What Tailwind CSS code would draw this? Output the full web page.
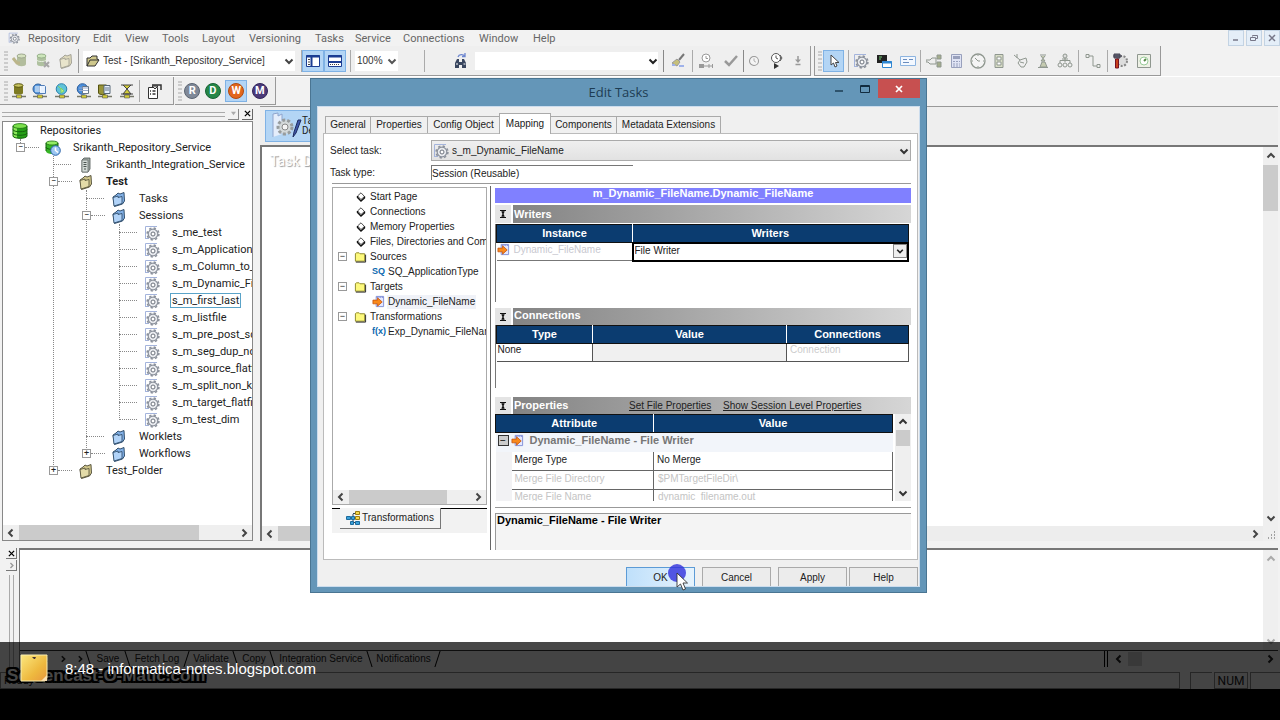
<!DOCTYPE html>
<html lang="en">
  <head>
    <meta charset="UTF-8">
    <meta name="viewport" content="width=device-width, initial-scale=1.0">
    <title>Workflow Manager - Edit Tasks</title>
    <script src="https://cdn.jsdelivr.net/npm/@tailwindcss/browser@4"></script>
  </head>
  <body class="bg-black font-[Roboto,sans-serif] text-[11px] leading-none text-[#222]">
    <!-- shared icons -->
    <svg class="hidden" xmlns="http://www.w3.org/2000/svg">
      <symbol id="db" viewBox="0 0 16 16">
        <path d="M1 3v10c0 1.500 3.500 2.500 7 2.500s7-1 7-2.500V3z" fill="#25a016"/>
        <path d="M1 3v10c0 1 1.500 1.800 4 2.200V4z" fill="#8ce85a"/>
        <ellipse cx="8" cy="3" rx="7" ry="2.400" fill="#7be04c" stroke="#1b6f10" stroke-width=".8"/>
        <path d="M1 6.500c0 3 14 3 14 0M1 10c0 3 14 3 14 0M1 13c0 3 14 3 14 0V3M1 13V3" fill="none" stroke="#14600c"/>
      </symbol>
      <symbol id="dbclock" viewBox="0 0 16 16">
        <path d="M1 3v8c0 2 3 3 6 3s6-1 6-3V3z" fill="#37b526"/>
        <ellipse cx="7" cy="3" rx="6" ry="2" fill="#92ec64" stroke="#1b6f10" stroke-width=".8"/>
        <path d="M1 7c0 2 6 3 8 2M1 11V3M13 6V3" fill="none" stroke="#14600c"/>
        <circle cx="10.500" cy="10.500" r="4.800" fill="#9bc6f2" stroke="#2a62a8"/>
        <path d="M10.500 7.500v3l2.500 2" fill="none" stroke="#fff" stroke-width="1.500"/>
      </symbol>
      <symbol id="server" viewBox="0 0 16 16">
        <path d="M4 3l2-2h6v11l-2 3H4z" fill="#9fa8a4" stroke="#4c5450" stroke-width=".8"/>
        <path d="M4 3h6v12H4z" fill="#d2dad6" stroke="#68706c" stroke-width=".8"/>
        <path d="M5.500 5.500h3M5.500 7.500h3M5.500 9.500h3M6 12h2" stroke="#4c5450"/>
      </symbol>
      <symbol id="foldertan" viewBox="0 0 16 16">
        <path d="M2 6l3-2 2-2 2 1 4-1.500.500 8.500-2 3-8 2.500z" fill="#cfc58a" stroke="#4d4a34" stroke-width=".9"/>
        <path d="M2 6.500l1 8.500 8-2.500V5.500l-4 1V5z" fill="#e3dba8" stroke="#4d4a34" stroke-width=".8"/>
      </symbol>
      <symbol id="folderblue" viewBox="0 0 16 16">
        <path d="M2 6l3-2 2-2 2 1 4-1.500.500 8.500-2 3-8 2.500z" fill="#82b0e6" stroke="#24425f" stroke-width=".9"/>
        <path d="M2 6.500l1 8.500 8-2.500V5.500l-4 1V5z" fill="#b1d3f8" stroke="#24425f" stroke-width=".8"/>
      </symbol>
      <symbol id="folderyellow" viewBox="0 0 14 12">
        <path d="M1.500 10.500v-8l1-1h3l1 1h5v8z" fill="#fdf97c" stroke="#8a8526"/>
        <path d="M2 11.500h10.500V3.500" fill="none" stroke="#222"/>
      </symbol>
      <symbol id="session" viewBox="0 0 16 16">
        <path d="M1.500 14V1.500H13M1.500 13.500H5" fill="none" stroke="#a4b4dc"/>
        <circle cx="9" cy="9" r="4.800" fill="#e9ebef" stroke="#8b919c" stroke-width="1.200"/>
        <circle cx="9" cy="9" r="5.900" fill="none" stroke="#8b919c" stroke-width="1.600" stroke-dasharray="2.300 2.330"/>
        <circle cx="9" cy="9" r="2" fill="#fff" stroke="#6b717c"/>
      </symbol>
      <symbol id="target" viewBox="0 0 14 14">
        <path d="M4.500 1.500h8v11h-8z" fill="#e4e8ff" stroke="#7f8fd6"/>
        <path d="M5 2.500h7" stroke="#5566cc" stroke-dasharray="1 1"/>
        <path d="M1 5.500h5V3l5 4.500-5 4.500V9.500H1z" fill="#f98a1c" stroke="#c24d08" stroke-width=".8"/>
      </symbol>
      <symbol id="diamond" viewBox="0 0 10 10">
        <path d="M5 .8L8.500 4.500 5 7.500 1.500 4z" fill="#fff" stroke="#222" stroke-width=".8"/>
        <path d="M1.500 4v1.500L5 9l3.500-3V4.500" fill="none" stroke="#111" stroke-width="1.400"/>
      </symbol>
      <symbol id="left" viewBox="0 0 10 10"><path d="M6.500 1.500L3 5l3.500 3.500" fill="none" stroke="currentColor" stroke-width="2"/></symbol>
      <symbol id="right" viewBox="0 0 10 10"><path d="M3.500 1.500L7 5 3.500 8.500" fill="none" stroke="currentColor" stroke-width="2"/></symbol>
      <symbol id="up" viewBox="0 0 10 10"><path d="M1.500 6.500L5 3l3.500 3.500" fill="none" stroke="currentColor" stroke-width="2"/></symbol>
      <symbol id="down" viewBox="0 0 10 10"><path d="M1.500 3.500L5 7l3.500-3.500" fill="none" stroke="currentColor" stroke-width="2"/></symbol>
      <symbol id="collapse" viewBox="0 0 10 10"><path d="M2 1.500h6M2 8.500h6M5 2v6" stroke="#111" stroke-width="1.200"/><path d="M3 2.500h4L5 5zM3 7.500h4L5 5z" fill="#111"/></symbol>
      <symbol id="netbase" viewBox="0 0 16 16"><path d="M1 13.500h14" stroke="#77786a" stroke-width="1.500"/><path d="M5.500 12h5v3h-5z" fill="#d2cc38" stroke="#555" stroke-width=".6"/></symbol>
      <symbol id="clock" viewBox="0 0 16 16"><circle cx="8" cy="8" r="6" fill="#f4f4f4" stroke="currentColor" stroke-width="1.400"/><path d="M8 4.500V8l2.500 1.500" fill="none" stroke="currentColor"/></symbol>
    </svg>

    <div class="flex h-screen flex-col overflow-hidden pt-[30px] pb-[31px]">
      <div class="relative flex min-h-0 flex-1 flex-col bg-[#f2f2f2]">

        <!-- menu bar -->
        <header class="flex h-4 shrink-0 items-center justify-between">
          <nav class="flex items-center pl-2 text-[#666]">
            <svg class="mr-2 size-3"><use href="#session"/></svg>
            <a href="#" class="w-[65px]">Repository</a>
            <a href="#" class="w-8">Edit</a>
            <a href="#" class="w-[37px]">View</a>
            <a href="#" class="w-10">Tools</a>
            <a href="#" class="w-[47px]">Layout</a>
            <a href="#" class="w-[66px]">Versioning</a>
            <a href="#" class="w-10">Tasks</a>
            <a href="#" class="w-12">Service</a>
            <a href="#" class="w-[76px]">Connections</a>
            <a href="#" class="w-[54px]">Window</a>
            <a href="#">Help</a>
          </nav>
          <div class="flex gap-[2px] text-[#778]">
            <button aria-label="Minimize" class="flex size-4 items-center justify-center border border-[#c3d3e3] bg-[#e4eef8]"><svg class="size-2" viewBox="0 0 8 8"><path d="M1 6h5" stroke="currentColor" stroke-width="1.500"/></svg></button>
            <button aria-label="Restore" class="flex size-4 items-center justify-center border border-[#c3d3e3] bg-[#e4eef8]"><svg class="size-2" viewBox="0 0 8 8"><path d="M2.500 2.500v-1h5v3h-2M.5 3.500h5v3h-5z" fill="none" stroke="currentColor"/></svg></button>
            <button aria-label="Close" class="flex size-4 items-center justify-center border border-[#c3d3e3] bg-[#e4eef8]"><svg class="size-2" viewBox="0 0 8 8"><path d="M1 1l6 6M7 1L1 7" stroke="currentColor" stroke-width="1.500"/></svg></button>
          </div>
        </header>

        <!-- toolbar, first row -->
        <div class="flex h-[30px] shrink-0 items-stretch font-['Liberation_Sans',sans-serif] text-[10px]">
          <div class="flex w-[811px] shrink-0 items-center border-r border-b border-[#999] bg-[#efefef]">
            <div class="ml-1 h-5 w-1 border-x-2 border-dotted border-[#ccc]"></div>
            <div class="flex w-[69px] items-center justify-around">
              <button aria-label="Connect"><svg class="size-4 opacity-60" viewBox="0 0 16 16"><path d="M5 3v8c0 3 9 3 9 0V3z" fill="#8a9c68"/><ellipse cx="9.500" cy="3" rx="4.500" ry="2" fill="#c5d8a0" stroke="#6a7a50"/><path d="M1 5l4 5h3" fill="none" stroke="#9a8f48" stroke-width="3"/></svg></button>
              <button aria-label="Disconnect"><svg class="size-4 opacity-60" viewBox="0 0 16 16"><path d="M2 3v8c0 3 9 3 9 0V3z" fill="#86a46c"/><ellipse cx="6.500" cy="3" rx="4.500" ry="2" fill="#b6e098" stroke="#5d8748"/><path d="M2 7c0 2 9 2 9 0" fill="none" stroke="#e3f0d8"/><path d="M9 9l5 5M14 9l-5 5" stroke="#777" stroke-width="2"/></svg></button>
              <button aria-label="Close folder"><svg class="size-4 opacity-50"><use href="#foldertan"/></svg></button>
            </div>
            <div class="ml-px h-6 border-l border-[#999]"></div>
            <div class="relative ml-1 flex h-5 w-[212px] items-center bg-white">
              <svg class="ml-[3px] size-[14px]" viewBox="0 0 14 14"><path d="M1 12V4h3l2-2h5v3l2 1-4 6z" fill="#cfc88c" stroke="#333"/><path d="M1 12l3-6h9" fill="none" stroke="#333"/></svg>
              <select aria-label="Folder" class="h-5 flex-1 appearance-none pl-[3px] leading-5 text-[#333]"><option>Test - [Srikanth_Repository_Service]</option></select>
              <svg class="pointer-events-none absolute right-[1px] size-[10px] text-[#444]"><use href="#down"/></svg>
            </div>
            <div class="ml-[6px] h-[22px] border-l border-[#aaa]"></div>
            <div class="flex">
              <button aria-label="Navigator" class="flex h-[22px] w-[22px] items-center justify-center border border-[#7fb2e5] bg-[#b3d5f5]"><svg class="size-4" viewBox="0 0 16 16"><path d="M1.500 2.500h13v11h-13z" fill="#fff" stroke="#1b3d92"/><path d="M1 3.500h14M6.500 3v10" stroke="#1b3d92" stroke-width="2"/><path d="M3 6.500h2M3 9h2M3 11.500h2" stroke="#444"/></svg></button>
              <button aria-label="Output" class="flex h-[22px] w-[22px] items-center justify-center border border-[#7fb2e5] bg-[#b3d5f5]"><svg class="size-4" viewBox="0 0 16 16"><path d="M1.500 2.500h13v11h-13z" fill="#fff" stroke="#1b3d92"/><path d="M1 3.500h14M1 9h14" stroke="#1b3d92" stroke-width="2"/><path d="M3 11.500h10" stroke="#444" stroke-dasharray="1 1"/></svg></button>
            </div>
            <div class="ml-1 h-[22px] border-l border-[#aaa]"></div>
            <div class="relative ml-1 flex h-5 w-[43px] items-center bg-white">
              <select aria-label="Zoom" class="h-5 w-full appearance-none pl-[2px] leading-5 text-[#333]"><option>100%</option></select>
              <svg class="pointer-events-none absolute right-px size-[10px] text-[#555]"><use href="#down"/></svg>
            </div>
            <div class="ml-[26px] h-[22px] border-l border-[#aaa]"></div>
            <button aria-label="Find" class="ml-[28px]"><svg class="size-4" viewBox="0 0 16 16"><path d="M2 15v-5l2-4h2v9zM9 15V6h2l2 4v5zM6 9h3v3H6z" fill="#39465f"/><path d="M5 4c1-3 5-3 7-1M12 0v3.500H9" fill="none" stroke="#6d86cf" stroke-width="1.300"/><path d="M3 11h2M10.500 11h2" stroke="#fff"/></svg></button>
            <div class="relative ml-[6px] flex h-[18px] w-[183px] items-center bg-white">
              <input type="text" aria-label="Find text" class="w-full">
              <svg class="absolute right-0 size-[10px] text-[#222]"><use href="#down"/></svg>
            </div>
            <div class="ml-[5px] h-[22px] border-l border-[#888]"></div>
            <button aria-label="Clear" class="ml-[6px]"><svg class="size-4" viewBox="0 0 16 16"><path d="M14 1L9 7" stroke="#777" stroke-width="2"/><path d="M7 6l3 3-3 4-5-3z" fill="#c6c07a" stroke="#999"/><path d="M2 12h3M9 13h5" stroke="#9fb2ea" stroke-width="2"/></svg></button>
            <div class="ml-[6px] h-[22px] border-l border-[#aaa]"></div>
            <div class="flex w-[50px] items-center justify-around text-[#999]">
              <button aria-label="Schedule"><svg class="size-4" viewBox="0 0 16 16"><circle cx="8" cy="5" r="4" fill="#fff" stroke="currentColor"/><path d="M8 3v2.500h2" fill="none" stroke="currentColor"/><path d="M1 11h5v4H1z" fill="currentColor"/><path d="M6 13h8M11 11v4M14.500 11v4" stroke="currentColor"/></svg></button>
              <button aria-label="Validate"><svg class="size-4" viewBox="0 0 16 16"><path d="M2 8l4 4 8-9" fill="none" stroke="currentColor" stroke-width="2.500"/></svg></button>
            </div>
            <div class="h-[22px] border-l border-[#888]"></div>
            <div class="flex w-[64px] items-center justify-around text-[#999]">
              <button aria-label="Start"><svg class="size-3"><use href="#clock"/></svg></button>
              <button aria-label="Run"><svg class="size-4" viewBox="0 0 16 16"><circle cx="8" cy="5" r="4.500" fill="#fff" stroke="#555"/><path d="M8 2.500V5l2 1M12 2l2 3-2 3" fill="none" stroke="#555"/><path d="M6 10l5 3-5 3z" fill="#333"/></svg></button>
              <button aria-label="Step"><svg class="size-3" viewBox="0 0 12 12"><path d="M6 1v4M3.500 9.500h5" fill="none" stroke="currentColor" stroke-width="1.500"/><path d="M3 4.500h6L6 8z" fill="currentColor"/></svg></button>
            </div>
          </div>
          <div class="ml-[3px] flex w-[347px] shrink-0 items-center border-r border-b border-l border-[#999] bg-[#efefef] text-[#8f978f]">
            <div class="ml-[3px] h-5 w-1 border-x-2 border-dotted border-[#ccc]"></div>
            <button aria-label="Select" class="ml-px flex h-[22px] w-[21px] items-center justify-center border border-[#7fb2e5] bg-[#b3d5f5]"><svg class="size-4" viewBox="0 0 16 16"><path d="M5 2v10l2.500-2 1.500 4 2-1-1.500-3.500H13z" fill="#fff" stroke="#444"/></svg></button>
            <div class="ml-1 h-[22px] border-l border-[#aaa]"></div>
            <div class="flex w-[71px] items-center justify-around">
              <button aria-label="Session"><svg class="size-4"><use href="#session"/></svg></button>
              <button aria-label="Command"><svg class="size-4" viewBox="0 0 16 16"><path d="M1 2h10v8H1z" fill="#222"/><path d="M3 4h3M3 6h2" stroke="#7c7"/><path d="M6.500 8.500h9v6h-9z" fill="#fff" stroke="#2f86d2"/><path d="M6 9.500h10" stroke="#2f86d2" stroke-width="2"/></svg></button>
              <button aria-label="Email"><svg class="size-4" viewBox="0 0 16 16"><path d="M.5 3.500h15v9H.5z" fill="#f3f8ff" stroke="#8db4e0"/><path d="M3 6.500h4M9 6.500h4M3 9.500h6" stroke="#6a8cbd"/></svg></button>
            </div>
            <div class="h-[22px] border-l border-[#aaa]"></div>
            <div class="flex w-[157px] items-center justify-around px-[2px]">
              <button aria-label="Decision"><svg class="size-4" viewBox="0 0 16 16"><path d="M0 7h4l2-2h4v6H4l-2-2H0z" fill="#eee" stroke="currentColor"/><path d="M11 2h4v4h-4zM11 9h4v5h-4z" fill="#a4ad8c" stroke="currentColor"/></svg></button>
              <button aria-label="Assignment"><svg class="size-4" viewBox="0 0 16 16"><path d="M3.500 1.500h10v13h-10z" fill="#dfe3f4" stroke="#98a0bc"/><path d="M5 3h7v3H5z" fill="#98a0bc"/><path d="M5 8.500h7M5 11h7M5 13h7" stroke="#98a0bc" stroke-dasharray="2 1"/></svg></button>
              <button aria-label="Timer"><svg class="size-4" viewBox="0 0 16 16"><circle cx="8" cy="8" r="7" fill="#f4f4f4" stroke="currentColor" stroke-width="1.300"/><path d="M5 5l3 3h2M8 2v1M8 13v1M2 8h1M13 8h1" fill="none" stroke="currentColor"/></svg></button>
              <button aria-label="Control"><svg class="size-4" viewBox="0 0 16 16"><path d="M4 1.500h8v13H4z" fill="#d7dcc6" stroke="currentColor"/><path d="M6 4h4v3H6zM6 9h4v3H6z" fill="#fff" stroke="currentColor"/></svg></button>
              <button aria-label="Event wait"><svg class="size-4" viewBox="0 0 16 16"><path d="M1 2l6 5M4 1v4M7 7l6-2 1 4-3 5H8L5 10zM7 9l4 1" fill="none" stroke="currentColor"/></svg></button>
              <button aria-label="Event raise"><svg class="size-4" viewBox="0 0 16 16"><path d="M5 2h6M6 3l4 5H6l4-5M5 14l2-5h3l2 5zM3 14.500h10" fill="#c5cbb0" stroke="currentColor"/></svg></button>
              <button aria-label="Worklet"><svg class="size-4" viewBox="0 0 16 16"><circle cx="8" cy="3" r="2" fill="#ddd" stroke="currentColor"/><path d="M8 5v4M3 10V7.500h10V10M5 6h6" fill="none" stroke="currentColor"/><circle cx="3" cy="12" r="2" fill="#eee" stroke="currentColor"/><circle cx="8" cy="12" r="2" fill="#eee" stroke="currentColor"/><circle cx="13" cy="12" r="2" fill="#eee" stroke="currentColor"/></svg></button>
            </div>
            <div class="h-[22px] border-l border-[#aaa]"></div>
            <button aria-label="Link" class="mx-[6px]"><svg class="size-4" viewBox="0 0 16 16"><path d="M1 1.500h3v3H1zM12 11.500h3v3h-3zM4 3h4v10h4" fill="none" stroke="currentColor"/></svg></button>
            <div class="h-[22px] border-l border-[#aaa]"></div>
            <div class="flex w-[48px] items-center justify-around">
              <button aria-label="Edit session"><svg class="size-4" viewBox="0 0 16 16"><circle cx="10" cy="8" r="5" fill="#ddd" stroke="#888" stroke-width="2" stroke-dasharray="2 1.500"/><path d="M1 3h9M2 1h6v4H2z" fill="#667" stroke="#445"/><path d="M3.500 6h3v9h-3z" fill="#c8401c" stroke="#712"/></svg></button>
              <button aria-label="View"><svg class="size-4" viewBox="0 0 16 16"><path d="M1.500 1.500h13v13h-13z" fill="#eef1e6" stroke="currentColor"/><circle cx="8" cy="8" r="4" fill="#fff" stroke="#9c9"/><path d="M8 8l2-2" stroke="#584" stroke-width="2"/></svg></button>
            </div>
          </div>
        </div>

        <!-- toolbar, second row -->
        <div class="flex h-[29px] shrink-0 border-t border-white">
          <div class="flex w-[174px] items-center border-r border-b border-[#999] bg-[#efefef]">
            <div class="ml-1 h-5 w-1 border-x-2 border-dotted border-[#ccc]"></div>
            <div class="flex w-[130px] items-center justify-around">
              <button aria-label="Repository Manager"><svg class="size-4" viewBox="0 0 16 16"><use href="#netbase"/><path d="M3 2v8c0 2 9 2 9 0V2z" fill="#7d7a22"/><ellipse cx="7.500" cy="2.500" rx="4.500" ry="1.800" fill="#c9c561" stroke="#55520e"/></svg></button>
              <button aria-label="Designer"><svg class="size-4" viewBox="0 0 16 16"><use href="#netbase"/><circle cx="6" cy="6" r="5" fill="#5b9be0" stroke="#2d5e9c"/><path d="M7.500 2.500h5l1 1v7h-6z" fill="#e7f1ff" stroke="#4f7db8"/><path d="M3 4h6M3 6h6M3 8h6" stroke="#fff"/></svg></button>
              <button aria-label="Workflow Manager"><svg class="size-4" viewBox="0 0 16 16"><use href="#netbase"/><circle cx="7.500" cy="6" r="5.300" fill="#5fc3d8" stroke="#2b7fae"/><path d="M4 3l3 3v4l3-2-3-3" fill="#bdf08a" stroke="#7fd06a"/></svg></button>
              <button aria-label="Workflow Monitor"><svg class="size-4" viewBox="0 0 16 16"><use href="#netbase"/><circle cx="6.500" cy="6" r="5.300" fill="#4a8edb" stroke="#2d5e9c"/><path d="M6.500 3.500h6v7h-6z" fill="#fff" stroke="#678"/><path d="M3 5h9M3 7.500h9" stroke="#9ac"/></svg></button>
              <button aria-label="Copy"><svg class="size-4" viewBox="0 0 16 16"><use href="#netbase"/><path d="M1.500 2v8c0 2 8 2 8 0V2z" fill="#98943a" stroke="#55520e"/><path d="M7 2.500h6v8H7z" fill="#e7f1ff" stroke="#567"/><path d="M8 5h4M8 7h4" stroke="#678"/></svg></button>
              <button aria-label="Analyze"><svg class="size-4" viewBox="0 0 16 16"><use href="#netbase"/><path d="M2 2h12M4 2l4 4 4-4M4 11l4-5 4 5zM2 11h12" fill="#d2cc38" stroke="#444"/></svg></button>
            </div>
            <div class="ml-px h-[22px] border-l border-[#aaa]"></div>
            <button aria-label="Properties" class="ml-[7px]"><svg class="size-4" viewBox="0 0 16 16"><path d="M1.500 4.500h9v11h-9z" fill="#fff" stroke="#333"/><path d="M3 8h1M3 11h1M5.500 8h3M5.500 11h3M5 2h9v5" stroke="#333" stroke-width="1.500" fill="none"/><path d="M5 3l3 3 3-3z" fill="#ddd" stroke="#333"/></svg></button>
          </div>
          <div class="ml-px flex w-[101px] items-center border-r border-b border-[#999] bg-[#efefef]">
            <div class="ml-[3px] h-5 w-1 border-x-2 border-dotted border-[#ccc]"></div>
            <div class="flex w-[88px] items-center justify-around text-[11px] font-bold text-white">
              <button class="size-4 rounded-full border border-[#5b6472] bg-[#808998]">R</button>
              <button class="size-4 rounded-full border border-[#176334] bg-[#258748]">D</button>
              <span class="border border-[#7fb2e5] bg-[#b3d5f5] p-[2px]"><button class="block size-4 rounded-full border border-[#b04a10] bg-[#e2661c]">W</button></span>
              <button class="size-4 rounded-full border border-[#33265c] bg-[#4b3a78]">M</button>
            </div>
          </div>
        </div>

        <!-- navigator and workspace -->
        <div class="flex min-h-0 flex-1">
          <aside class="flex w-[253px] shrink-0 flex-col pl-[2px]">
            <div class="flex h-4 shrink-0 items-center gap-[3px] pt-[2px]">
              <div class="h-[5px] flex-1 border-y border-[#aaa]"></div>
              <button aria-label="Pin" class="flex size-[11px] items-center justify-center border-r border-b border-[#888] text-[#aaa]"><svg class="size-[5px]" viewBox="0 0 6 6"><path d="M0 1h6L3 5z" fill="currentColor"/></svg></button>
              <button aria-label="Close navigator" class="flex size-[11px] items-center justify-center border-r border-b border-[#666]"><svg class="size-[7px]" viewBox="0 0 8 8"><path d="M1 1l6 6M7 1L1 7" stroke="#000" stroke-width="1.500"/></svg></button>
            </div>
            <div class="flex min-h-0 flex-1 flex-col overflow-hidden border border-[#888] bg-white">
              <div class="min-h-0 flex-1 overflow-hidden pl-[9px] whitespace-nowrap">
                <div class="flex h-[17px] items-center gap-3"><svg class="size-4"><use href="#db"/></svg>Repositories</div>
                <ul class="relative before:absolute before:top-0 before:left-2 before:h-2 before:border-l before:border-dotted before:border-[#888]">
                  <li>
                    <div class="flex h-[17px] items-center"><span class="relative flex w-[33px] items-center pl-1"><i class="relative flex size-[9px] items-center justify-center border border-[#999] bg-white text-[9px] not-italic">−</i><i class="w-[14px] border-t border-dotted border-[#888]"></i></span><svg class="mr-3 size-4"><use href="#dbclock"/></svg>Srikanth_Repository_Service</div>
                    <ul class="relative ml-[33px] before:absolute before:top-0 before:bottom-2 before:left-2 before:border-l before:border-dotted before:border-[#888]">
                      <li class="flex h-[17px] items-center"><span class="flex w-[33px] pl-2"><i class="w-[18px] border-t border-dotted border-[#888]"></i></span><svg class="mr-3 size-4"><use href="#server"/></svg>Srikanth_Integration_Service</li>
                      <li>
                        <div class="flex h-[17px] items-center"><span class="flex w-[33px] items-center pl-1"><i class="relative flex size-[9px] items-center justify-center border border-[#999] bg-white text-[9px] not-italic">−</i><i class="w-[14px] border-t border-dotted border-[#888]"></i></span><svg class="mr-3 size-4"><use href="#foldertan"/></svg><b>Test</b></div>
                        <ul class="relative ml-[33px] before:absolute before:top-0 before:bottom-2 before:left-2 before:border-l before:border-dotted before:border-[#888]">
                          <li class="flex h-[17px] items-center"><span class="flex w-[33px] pl-2"><i class="w-[18px] border-t border-dotted border-[#888]"></i></span><svg class="mr-3 size-4"><use href="#folderblue"/></svg>Tasks</li>
                          <li>
                            <div class="flex h-[17px] items-center"><span class="flex w-[33px] items-center pl-1"><i class="relative flex size-[9px] items-center justify-center border border-[#999] bg-white text-[9px] not-italic">−</i><i class="w-[14px] border-t border-dotted border-[#888]"></i></span><svg class="mr-3 size-4"><use href="#folderblue"/></svg>Sessions</div>
                            <ul id="sessions" class="relative ml-[33px] before:absolute before:top-0 before:bottom-2 before:left-2 before:border-l before:border-dotted before:border-[#888]"></ul>
                          </li>
                          <li class="flex h-[17px] items-center"><span class="flex w-[33px] pl-2"><i class="w-[18px] border-t border-dotted border-[#888]"></i></span><svg class="mr-3 size-4"><use href="#folderblue"/></svg>Worklets</li>
                          <li class="flex h-[17px] items-center"><span class="flex w-[33px] items-center pl-1"><i class="relative flex size-[9px] items-center justify-center border border-[#999] bg-white text-[9px] not-italic">+</i><i class="w-[14px] border-t border-dotted border-[#888]"></i></span><svg class="mr-3 size-4"><use href="#folderblue"/></svg>Workflows</li>
                        </ul>
                      </li>
                      <li class="flex h-[17px] items-center"><span class="flex w-[33px] items-center pl-1"><i class="relative flex size-[9px] items-center justify-center border border-[#999] bg-white text-[9px] not-italic">+</i><i class="w-[14px] border-t border-dotted border-[#888]"></i></span><svg class="mr-3 size-4"><use href="#foldertan"/></svg>Test_Folder</li>
                    </ul>
                  </li>
                </ul>
              </div>
              <div class="flex h-[15px] shrink-0 items-center bg-[#efefef] text-[#444]">
                <svg class="mx-[3px] size-[10px]"><use href="#left"/></svg>
                <div class="h-full w-[180px] bg-[#cbcbcb]"></div>
                <svg class="mr-[3px] ml-auto size-[10px]"><use href="#right"/></svg>
              </div>
            </div>
          </aside>

          <main class="ml-[7px] flex min-w-0 flex-1 flex-col pr-[2px]">
            <div class="mt-px flex h-[39px] shrink-0 items-center border-t border-[#999] bg-[#eee] pl-[5px]">
              <button class="flex h-[32px] w-[130px] items-center border border-[#7fb2e5] bg-[#b3d5f5] pl-1 text-left text-[10px]">
                <svg class="size-8" viewBox="0 0 32 32"><path d="M3 27V4l5-1v3l4-2v20" fill="#e4edfb" stroke="#8fa5cd"/><circle cx="15" cy="17" r="7" fill="#d4d9da" stroke="#979c9e" stroke-width="3" stroke-dasharray="3 2"/><circle cx="15" cy="17" r="3" fill="#f4f4f4" stroke="#888"/><path d="M31 10l-5 13-3 4 1-5 4-12z" fill="#3f57a8" stroke="#1d2b60"/></svg>
                <span>Task<br>Developer</span>
              </button>
            </div>
            <div class="flex min-h-0 flex-1 border-t-2 border-l-2 border-[#777]">
              <div class="flex min-w-0 flex-1 flex-col bg-white">
                <h2 class="flex-1 px-2 pt-[7px] text-[14px] text-white [text-shadow:1px_1px_1px_#999]">Task Developer</h2>
                <div class="flex h-[15px] items-center bg-[#ededed] text-[#444]">
                  <svg class="mx-[3px] size-[10px]"><use href="#left"/></svg>
                  <div class="h-full w-[300px] bg-[#cbcbcb]"></div>
                  <svg class="mr-[3px] ml-auto size-[10px]"><use href="#right"/></svg>
                </div>
              </div>
              <div class="flex w-[15px] flex-col items-center bg-[#efefef] text-[#444]">
                <svg class="my-1 size-[10px]"><use href="#up"/></svg>
                <div class="h-[46px] w-full bg-[#cbcbcb]"></div>
                <svg class="mt-auto mb-1 size-[10px]"><use href="#down"/></svg>
                <svg class="mt-1 size-[10px]" viewBox="0 0 10 10"><path d="M8 1h1M5 4h1M8 4h1M2 7h1M5 7h1M8 7h1" stroke="#888" stroke-width="1.500"/></svg>
              </div>
            </div>
          </main>
        </div>

        <!-- output window -->
        <section class="mt-[7px] flex h-[124px] shrink-0 pr-[2px]">
          <div class="flex w-[19px] shrink-0 flex-col items-center pl-1">
            <button aria-label="Close output" class="flex size-[11px] items-center justify-center border-r border-b border-[#777]"><svg class="size-[7px]" viewBox="0 0 8 8"><path d="M1 1l6 6M7 1L1 7" stroke="#000" stroke-width="1.500"/></svg></button>
            <button aria-label="Expand" class="mt-px flex size-[11px] items-center justify-center border-r border-b border-[#777] text-[#999]"><svg class="size-[7px]"><use href="#right"/></svg></button>
            <div class="mt-1 w-[5px] flex-1 border-x border-[#aaa]"></div>
          </div>
          <div class="flex min-w-0 flex-1 flex-col border-t-2 border-l border-[#777]">
            <div class="flex min-h-0 flex-1">
              <div class="flex-1 bg-white"></div>
              <div class="flex w-[15px] flex-col items-center justify-between bg-[#efefef] py-1 text-[#aaa]"><svg class="size-[10px]"><use href="#up"/></svg><svg class="size-[10px]"><use href="#down"/></svg></div>
            </div>
            <div class="flex h-[22px] items-start border-t border-[#333] font-['Liberation_Sans',sans-serif] text-[10px] leading-4">
              <div class="flex h-4 w-[68px] shrink-0 items-center justify-around"><svg class="size-2"><use href="#left"/></svg><svg class="size-2"><use href="#left"/></svg><svg class="size-2"><use href="#right"/></svg><svg class="size-2"><use href="#right"/></svg></div>
              <i class="h-4 skew-x-[18deg] border-l border-black"></i><button class="w-[38px] text-center">Save</button>
              <i class="h-4 skew-x-[18deg] border-l border-black"></i><button class="w-[58px] text-center">Fetch Log</button>
              <i class="h-4 -skew-x-[18deg] border-l border-black"></i><button class="w-[48px] text-center">Validate</button>
              <i class="h-4 skew-x-[18deg] border-l border-black"></i><button class="w-[36px] text-center">Copy</button>
              <i class="h-4 skew-x-[18deg] border-l border-black"></i><button class="w-[96px] text-center">Integration Service</button>
              <i class="h-4 skew-x-[18deg] border-l border-black"></i><button class="w-[67px] text-center">Notifications</button>
              <i class="h-4 -skew-x-[18deg] border-l border-black"></i>
              <div class="ml-auto flex h-4 w-[174px] items-center border-l-4 border-double border-black pl-[6px]"><svg class="mr-1 size-[10px]"><use href="#left"/></svg><span class="size-[14px] bg-[#cbcbcb]"></span><svg class="mr-[3px] ml-auto size-[10px]"><use href="#right"/></svg></div>
            </div>
          </div>
        </section>
        <footer class="flex h-[17px] shrink-0 items-stretch gap-[10px]">
          <div class="flex-1 border border-[#888] px-[3px] pt-[2px]">Ready</div>
          <div class="w-[22px] border-t border-l border-[#888]"></div>
          <div class="-ml-2 flex w-[34px] items-center justify-center border border-[#888] text-[12px]">NUM</div>
          <div class="-ml-2 w-[30px] border-t border-l border-[#888]"></div>
        </footer>

        <!-- recording watermark and caption strip -->
        <div class="absolute bottom-[5px] left-[7px] font-['Liberation_Sans',sans-serif] text-[17px] font-bold text-white [text-shadow:-2px_-2px_0_#000,2px_-2px_0_#000,-2px_2px_0_#000,2px_2px_0_#000,0_2px_0_#000,0_-2px_0_#000,2px_0_0_#000,-2px_0_0_#000]">Screencast-O-Matic.com</div>
        <div class="absolute inset-x-0 bottom-0 flex h-[47px] items-center bg-black/72 pt-[5px] pl-5 font-['Liberation_Sans',sans-serif] text-[15px] text-white">
          <svg class="mr-[17px] size-7" viewBox="0 0 28 28">
            <defs><linearGradient id="note" x1="0" y1="0" x2="1" y2="1"><stop offset="0" stop-color="#fbe77e"/><stop offset=".6" stop-color="#eeb93f"/><stop offset="1" stop-color="#e8973d"/></linearGradient></defs>
            <path d="M1 1h26v23l-2 3H1z" fill="url(#note)" stroke="#f9edb0"/><path d="M21 27l6-6v6z" fill="#fbe0b0"/><path d="M12 3h4l-1 2h-1z" fill="#433"/>
          </svg>
          8:48 - informatica-notes.blogspot.com
        </div>

        <!-- Edit Tasks dialog -->
        <div role="dialog" aria-label="Edit Tasks" class="absolute top-[48px] left-[310px] flex h-[515px] w-[617px] flex-col border border-[#4a7592] bg-[#6496b8] px-[6px] pb-[5px] font-['Liberation_Sans',sans-serif] text-[10px]">
          <div class="relative flex h-[27px] shrink-0 items-center justify-center">
            <h1 class="font-['Open_Sans',sans-serif] text-[13px] text-[#1d3c53]">Edit Tasks</h1>
            <div class="absolute top-0 right-0 flex items-start">
              <button aria-label="Minimize dialog" class="flex h-[19px] w-[26px] items-center justify-center"><svg class="size-[10px]" viewBox="0 0 10 10"><path d="M1 7h8" stroke="#1d3c53" stroke-width="1.500"/></svg></button>
              <button aria-label="Maximize dialog" class="flex h-[19px] w-[26px] items-center justify-center"><svg class="size-[10px]" viewBox="0 0 10 10"><path d="M.5 1.500h9v7h-9zM.5 2.500h9" fill="none" stroke="#122c40"/></svg></button>
              <button aria-label="Close dialog" class="flex h-[19px] w-[42px] items-center justify-center bg-[#c75050]"><svg class="size-2" viewBox="0 0 8 8"><path d="M1 1l6 6M7 1L1 7" stroke="#fff" stroke-width="1.700"/></svg></button>
            </div>
          </div>
          <div class="flex min-h-0 flex-1 flex-col overflow-hidden border border-[#cde] bg-[#f0f0f0] pt-[6px] pr-px pl-[5px]">
            <div class="flex h-5 shrink-0 items-end text-center">
              <button class="ml-[2px] h-[17px] w-[46px] border border-b-0 border-[#aaa]">General</button>
              <button class="h-[17px] w-[57px] border border-b-0 border-l-0 border-[#aaa]">Properties</button>
              <button class="h-[17px] w-[71px] border-t border-[#aaa]">Config Object</button>
              <button class="relative -mb-px h-[21px] w-[52px] shrink-0 border border-b-0 border-[#aaa] bg-white">Mapping</button>
              <button class="h-[17px] w-[66px] border-t border-r border-[#aaa]">Components</button>
              <button class="h-[17px] w-[104px] border-t border-r border-[#aaa]">Metadata Extensions</button>
            </div>
            <div class="flex min-h-0 flex-1 flex-col border border-[#bbb] bg-white pr-[6px] pl-2">
              <div class="mt-[6px] flex items-center">
                <label for="task" class="-ml-[2px] w-[101px]">Select task:</label>
                <div class="relative flex flex-1 items-center">
                  <svg class="pointer-events-none absolute left-[2px] size-4"><use href="#session"/></svg>
                  <select id="task" class="h-[21px] w-full appearance-none border border-[#aaa] bg-linear-to-b from-[#efefef] to-[#e2e2e2] pl-5"><option>s_m_Dynamic_FileName</option></select>
                  <svg class="pointer-events-none absolute right-[2px] size-[10px] text-[#333]"><use href="#down"/></svg>
                </div>
              </div>
              <div class="mt-1 flex items-center">
                <label for="type" class="-ml-[2px] w-[101px]">Task type:</label>
                <input id="type" type="text" value="Session (Reusable)" readonly class="h-[15px] w-[202px] border-t border-l border-[#777]">
              </div>
              <div class="mt-[3px] flex min-h-0 flex-1 border-t border-[#999]">
                <!-- transformation tree -->
                <div class="mt-[3px] mb-[26px] flex w-[155px] shrink-0 flex-col">
                  <div class="flex min-h-0 flex-1 flex-col overflow-hidden border border-[#aaa] whitespace-nowrap">
                    <ul class="min-h-0 flex-1 overflow-hidden pt-px">
                      <li class="flex h-[15px] items-center pl-[23px]"><svg class="mr-1 size-[10px]"><use href="#diamond"/></svg>Start Page</li>
                      <li class="flex h-[15px] items-center pl-[23px]"><svg class="mr-1 size-[10px]"><use href="#diamond"/></svg>Connections</li>
                      <li class="flex h-[15px] items-center pl-[23px]"><svg class="mr-1 size-[10px]"><use href="#diamond"/></svg>Memory Properties</li>
                      <li class="flex h-[15px] items-center pl-[23px]"><svg class="mr-1 size-[10px] shrink-0"><use href="#diamond"/></svg>Files, Directories and Commands</li>
                      <li class="flex h-[15px] items-center pl-[5px]"><i class="mr-[7px] flex size-[9px] items-center justify-center border border-[#999] text-[9px] not-italic">−</i><svg class="mr-[3px] h-3 w-[13px]"><use href="#folderyellow"/></svg>Sources</li>
                      <li class="flex h-[15px] items-center pl-[39px]"><b class="w-4 text-[9px] text-[#0b6ab0]">SQ</b>SQ_ApplicationType</li>
                      <li class="flex h-[15px] items-center pl-[5px]"><i class="mr-[7px] flex size-[9px] items-center justify-center border border-[#999] text-[9px] not-italic">−</i><svg class="mr-[3px] h-3 w-[13px]"><use href="#folderyellow"/></svg>Targets</li>
                      <li class="flex h-[15px] items-center pl-[39px]"><svg class="mr-[2px] size-[13px]"><use href="#target"/></svg><span class="bg-[#f0f2f8] px-px py-[2px]">Dynamic_FileName</span></li>
                      <li class="flex h-[15px] items-center pl-[5px]"><i class="mr-[7px] flex size-[9px] items-center justify-center border border-[#999] text-[9px] not-italic">−</i><svg class="mr-[3px] h-3 w-[13px]"><use href="#folderyellow"/></svg>Transformations</li>
                      <li class="flex h-[15px] items-center pl-[39px]"><b class="w-4 shrink-0 text-[9px] text-[#0b6ab0]">f(x)</b>Exp_Dynamic_FileName</li>
                    </ul>
                    <div class="flex h-[14px] shrink-0 items-center bg-[#efefef] text-[#444]">
                      <svg class="mx-[3px] size-[10px]"><use href="#left"/></svg>
                      <div class="h-full w-[98px] bg-[#cbcbcb]"></div>
                      <svg class="mr-[3px] ml-auto size-[10px]"><use href="#right"/></svg>
                    </div>
                  </div>
                  <div class="mt-[3px] h-[25px] shrink-0 border-t border-black bg-[#f2f2f2] pl-2">
                    <button class="-mt-px flex h-[21px] items-center gap-[2px] border-r border-b border-[#777] bg-[#f4f4f4] pr-[6px] pl-[6px]">
                      <svg class="size-[14px]" viewBox="0 0 14 14"><path d="M3 7h4M7 3v9M7 2.500h4M7 7h4M7 11.500h4" stroke="#345" fill="none"/><path d="M.5 5.500h4v3h-4zM5.500 5.500h3v3h-3z" fill="#3aa0d8" stroke="#1c6a9c"/><path d="M9.500.5h4v3h-4zM9.500 5.500h4v3h-4z" fill="#f6d84a" stroke="#9a7a10"/><path d="M9.500 10.500h4v3h-4zM4.500 10.500h3v3h-3z" fill="#3aa0d8" stroke="#1c6a9c"/></svg>
                      Transformations
                    </button>
                  </div>
                </div>
                <!-- target settings -->
                <div class="mt-[2px] mb-[9px] ml-[3px] flex min-w-0 flex-1 flex-col border-l border-[#666] pt-[2px] pl-1">
                  <div class="h-[15px] bg-[#8080ff] text-center text-[11px] leading-[11px] font-bold text-white">m_Dynamic_FileName.Dynamic_FileName</div>

                  <div class="mt-[2px] flex h-[18px] items-center bg-linear-to-r from-[#808080] to-[#d6d6d6]">
                    <button aria-label="Collapse writers" class="flex h-[18px] w-[18px] items-center justify-center border-r-2 border-white bg-[#e4e4e4]"><svg class="size-[10px]"><use href="#collapse"/></svg></button>
                    <h3 class="pl-px text-[11px] font-bold text-white">Writers</h3>
                  </div>
                  <div class="mt-px h-[78px] border-l border-[#777] pr-[2px]">
                    <table class="w-full table-fixed border-collapse">
                      <thead><tr class="h-[18px] bg-[#0b3c70] text-[11px] text-white"><th class="w-[136px] border border-[#111] border-r-white p-0">Instance</th><th class="border border-[#111] p-0">Writers</th></tr></thead>
                      <tbody><tr class="h-[18px] align-top"><td class="border-b border-[#777] p-0"><div class="flex items-center gap-1 text-[#c8c8d0]"><svg class="size-[13px]"><use href="#target"/></svg>Dynamic_FileName</div></td>
                        <td class="border-2 border-black p-0"><div class="relative flex items-center"><select aria-label="Writer" class="h-[14px] w-full appearance-none pl-px leading-[11px]"><option>File Writer</option></select><span class="pointer-events-none absolute right-0 flex h-[14px] w-[14px] items-center justify-center border border-[#888] bg-[#eee]"><svg class="size-2"><use href="#down"/></svg></span></div></td></tr></tbody>
                    </table>
                  </div>

                  <div class="mt-[6px] flex h-[17px] items-center bg-linear-to-r from-[#808080] to-[#d6d6d6]">
                    <button aria-label="Collapse connections" class="flex h-[17px] w-[18px] items-center justify-center border-r-2 border-white bg-[#e4e4e4]"><svg class="size-[10px]"><use href="#collapse"/></svg></button>
                    <h3 class="pb-[2px] pl-px text-[11px] font-bold text-white">Connections</h3>
                  </div>
                  <div class="h-[63px] border-l border-[#777] pr-[2px]">
                    <table class="w-full table-fixed border-collapse">
                      <thead><tr class="h-[18px] bg-[#0b3c70] text-[11px] text-white"><th class="w-[96px] border border-[#111] border-r-white p-0">Type</th><th class="border border-[#111] border-r-white p-0">Value</th><th class="w-[122px] border border-[#111] p-0">Connections</th></tr></thead>
                      <tbody><tr class="h-[18px] align-top"><td class="border border-l-0 border-[#555] px-px pt-px pb-0">None</td><td class="border border-[#555] bg-[#f0f0f0] p-0"></td><td class="border border-[#555] px-[3px] pt-px pb-0 text-[#ccc]">Connection</td></tr></tbody>
                    </table>
                  </div>

                  <div class="mt-[9px] flex h-[17px] items-center bg-linear-to-r from-[#808080] to-[#d6d6d6]">
                    <button aria-label="Collapse properties" class="flex h-[17px] w-[18px] items-center justify-center border-r-2 border-white bg-[#e4e4e4]"><svg class="size-[10px]"><use href="#collapse"/></svg></button>
                    <h3 class="w-[116px] pl-px text-[11px] font-bold text-white">Properties</h3>
                    <a href="#" class="w-[94px] whitespace-nowrap underline">Set File Properties</a>
                    <a href="#" class="whitespace-nowrap underline">Show Session Level Properties</a>
                  </div>
                  <div class="flex h-[87px] shrink-0 overflow-hidden">
                    <div class="flex-1 overflow-hidden">
                      <table class="w-full table-fixed border-collapse">
                        <thead><tr class="h-[18px] bg-[#0b3c70] text-[11px] text-white"><th class="w-4 border border-r-0 border-[#111] p-0"></th><th class="w-[142px] border border-l-0 border-[#111] border-r-white p-0 pr-4">Attribute</th><th class="border border-[#111] p-0">Value</th></tr></thead>
                        <tbody class="align-top">
                          <tr class="h-[19px] bg-[#f2f5fa]"><td colspan="3" class="p-0 pt-px"><div class="flex items-center text-[11px] text-[#777]"><i class="mx-[2px] flex size-[11px] items-center justify-center border border-[#333] bg-[#ccc] text-[10px] text-black not-italic">−</i><svg class="mr-[6px] size-[13px]"><use href="#target"/></svg><b>Dynamic_FileName - File Writer</b></div></td></tr>
                          <tr class="h-[19px]"><td class="bg-[#f2f2f4] p-0"></td><td class="border-r border-b border-[#666] px-[3px] pt-[3px] pb-0">Merge Type</td><td class="border-r border-b border-[#666] px-[3px] pt-[3px] pb-0">No Merge</td></tr>
                          <tr class="h-[19px] text-[#c4c4c4]"><td class="bg-[#f2f2f4] p-0"></td><td class="border-r border-b border-[#666] px-[3px] pt-[3px] pb-0">Merge File Directory</td><td class="border-r border-b border-[#666] px-1 pt-[3px] pb-0">$PMTargetFileDir\</td></tr>
                          <tr class="h-[19px] text-[#c4c4c4]"><td class="bg-[#f2f2f4] p-0"></td><td class="border-r border-[#666] px-[3px] pt-[2px] pb-0">Merge File Name</td><td class="border-r border-[#666] px-1 pt-[2px] pb-0">dynamic_filename.out</td></tr>
                        </tbody>
                      </table>
                    </div>
                    <div class="ml-[2px] flex w-4 flex-col items-center bg-[#efefef] text-[#333]">
                      <svg class="my-[3px] size-[10px]"><use href="#up"/></svg>
                      <div class="h-4 w-[14px] bg-[#cbcbcb]"></div>
                      <svg class="mt-auto mb-[3px] size-[10px]"><use href="#down"/></svg>
                    </div>
                  </div>
                  <div class="mt-[6px] border-t border-[#999]"></div>
                  <p class="mt-[5px] min-h-0 flex-1 border-t border-l border-[#999] bg-[#f4f4f4] pt-px pl-px text-[11px] font-bold text-black">Dynamic_FileName - File Writer</p>
                </div>
              </div>
            </div>
            <div class="flex h-[26px] shrink-0 items-start justify-end gap-[7px] pt-[7px]">
              <button class="h-[21px] w-[69px] border border-[#5c9bd6] bg-linear-to-r from-[#bfe0fb] to-[#e6f3fd]">OK</button>
              <button class="h-[21px] w-[69px] border border-[#aaa] bg-[#ececec]">Cancel</button>
              <button class="h-[21px] w-[69px] border border-[#aaa] bg-[#ececec]">Apply</button>
              <button class="-ml-[5px] h-[21px] w-[69px] border border-[#aaa] bg-[#ececec]">Help</button>
            </div>
          </div>
          <!-- mouse pointer with click highlight -->
          <svg class="pointer-events-none absolute top-[484px] left-[356px] h-7 w-6" viewBox="0 0 24 28"><circle cx="10" cy="10" r="9" fill="#2f2fdc" opacity=".8"/><path d="M10 10v14l3.500-3 2.500 6 2.500-1-2.500-6h4.500z" fill="#fff" stroke="#333" stroke-width=".9"/></svg>
        </div>
      </div>
    </div>
  </body>

  <script>
    const sessions = [
      's_me_test', 's_m_ApplicationType', 's_m_Column_to_row', 's_m_Dynamic_FileName',
      's_m_first_last', 's_m_listfile', 's_m_pre_post_sql', 's_m_seg_dup_non_dup',
      's_m_source_flatfile', 's_m_split_non_key', 's_m_target_flatfile', 's_m_test_dim'
    ]
    const selected = 's_m_first_last'

    document.getElementById('sessions').innerHTML = sessions.map(name => `
      <li class="flex h-[17px] items-center">
        <span class="flex w-[33px] shrink-0 pl-2"><i class="w-[18px] border-t border-dotted border-[#888]"></i></span>
        <svg class="mr-[10px] size-4 shrink-0"><use href="#session"/></svg>
        <span class="${name === selected ? 'border border-[#5aa3c8] px-px py-px' : 'px-[2px]'}">${name}</span>
      </li>`).join('')
  </script>
</html>
